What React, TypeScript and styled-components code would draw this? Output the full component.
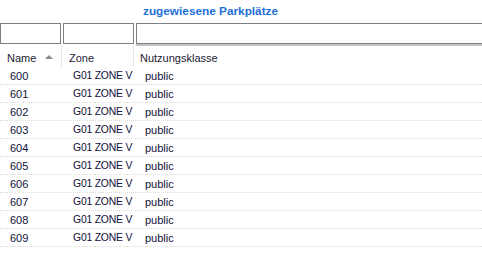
import styled, { createGlobalStyle } from "styled-components"

const rows = ["600", "601", "602", "603", "604", "605", "606", "607", "608", "609"]

const App = () => {
    return (
        <Cont>
            <Global />
            <Title>zugewiesene Parkplätze</Title>
            <Filters>
                <Filter w={61} />
                <Filter w={71} />
                <Filter last />
            </Filters>
            <Head>
                <HCell w={62}>
                    Name
                    <Arrow />
                </HCell>
                <HCell w={72}>Zone</HCell>
                <HCell>Nutzungsklasse</HCell>
            </Head>
            {rows.map((r) => (
                <Row key={r}>
                    <Cell w={62} pad={10}>{r}</Cell>
                    <Cell w={72} pad={11} tight>G01 ZONE V</Cell>
                    <Cell pad={11}>public</Cell>
                </Row>
            ))}
        </Cont>
    )
}
export default App

const Global = createGlobalStyle`
body{
    margin: 0;
    background: #fff;
    font-family: Tahoma, "Liberation Sans", sans-serif;
}
`
const Cont = styled.div`
width: 482px;
height: 263px;
overflow: hidden;
background: #fff;
`
const Title = styled.div`
height: 23px;
padding-left: 143px;
padding-top: 4px;
box-sizing: border-box;
font-family: Tahoma, "Liberation Sans", sans-serif;
font-weight: bold;
font-size: 11.8px;
color: #1e6fd6;
`
const Filters = styled.div`
display: flex;
gap: 2px;
height: 21px;
`
const Filter = styled.div<{ w?: number; last?: boolean }>`
width: ${(p) => (p.w ? p.w + "px" : "auto")};
flex: ${(p) => (p.last ? "1" : "none")};
border: 1px solid #7f7f7f;
border-right: ${(p) => (p.last ? "none" : "1px solid #7f7f7f")};
box-sizing: border-box;
box-shadow: ${(p) => (p.last ? "0 2px 0 0 #c4c4c4" : "none")};
`
const Head = styled.div`
display: flex;
height: 22px;
margin-top: 1px;
`
const HCell = styled.div<{ w?: number }>`
width: ${(p) => (p.w ? p.w + "px" : "auto")};
flex: ${(p) => (p.w ? "none" : "1")};
display: flex;
align-items: center;
padding: 3px 0 0 7px;
box-sizing: border-box;
white-space: nowrap;
font-family: Tahoma, "Liberation Sans", sans-serif;
font-size: 11px;
color: #1b1b33;
border-right: 1px solid #e6e6e6;
&:last-child{
    border-right: none;
    padding-left: 6px;
}
`
const Arrow = styled.span`
width: 0;
height: 0;
margin-left: 9px;
margin-top: -1px;
border-left: 4px solid transparent;
border-right: 4px solid transparent;
border-bottom: 4px solid #8a8a8a;
`
const Row = styled.div`
display: flex;
height: 18px;
box-sizing: border-box;
border-bottom: 1px dotted #dcdcdc;
`
const Cell = styled.div<{ w?: number; pad: number; tight?: boolean }>`
width: ${(p) => (p.w ? p.w + "px" : "auto")};
flex: ${(p) => (p.w ? "none" : "1")};
padding-left: ${(p) => p.pad}px;
box-sizing: border-box;
display: flex;
align-items: center;
white-space: nowrap;
font-family: Tahoma, "Liberation Sans", sans-serif;
font-size: ${(p) => (p.tight ? "10.4px" : "11px")};
letter-spacing: ${(p) => (p.tight ? "-0.2px" : "0")};
color: #10103a;
`
